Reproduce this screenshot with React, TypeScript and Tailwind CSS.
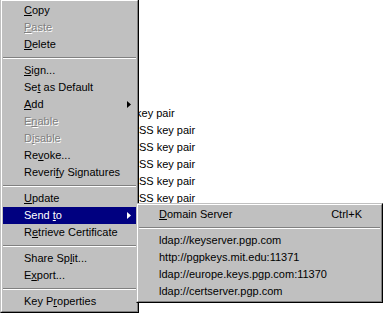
import React from "react";

type Item =
  | { sep: true }
  | { sep?: false; label: string; u: number; disabled?: boolean; sub?: boolean; active?: boolean; shortcut?: string };

const mainItems: Item[] = [
  { label: "Copy", u: 0 },
  { label: "Paste", u: 0, disabled: true },
  { label: "Delete", u: 0 },
  { sep: true },
  { label: "Sign...", u: 0 },
  { label: "Set as Default", u: 2 },
  { label: "Add", u: 0, sub: true },
  { label: "Enable", u: 1, disabled: true },
  { label: "Disable", u: 1, disabled: true },
  { label: "Revoke...", u: 2 },
  { label: "Reverify Signatures", u: 6 },
  { sep: true },
  { label: "Update", u: 0 },
  { label: "Send to", u: 5, sub: true, active: true },
  { label: "Retrieve Certificate", u: 1 },
  { sep: true },
  { label: "Share Split...", u: 8 },
  { label: "Export...", u: 1 },
  { sep: true },
  { label: "Key Properties", u: 5 },
];

const subItems: Item[] = [
  { label: "Domain Server", u: 0, shortcut: "Ctrl+K" },
  { sep: true },
  { label: "ldap://keyserver.pgp.com", u: -1 },
  { label: "http://pgpkeys.mit.edu:11371", u: -1 },
  { label: "ldap://europe.keys.pgp.com:11370", u: -1 },
  { label: "ldap://certserver.pgp.com", u: -1 },
];

function Label({ text, u }: { text: string; u: number }) {
  if (u < 0) return <span>{text}</span>;
  return (
    <span>
      {text.slice(0, u)}
      <u className="underline underline-offset-[1px]">{text[u]}</u>
      {text.slice(u + 1)}
    </span>
  );
}

function Sep() {
  return (
    <div className="h-[9px] flex flex-col justify-center">
      <div className="h-px bg-[#808080]" />
      <div className="h-px bg-white" />
    </div>
  );
}

function Arrow({ white }: { white?: boolean }) {
  return (
    <svg width="4" height="7" viewBox="0 0 4 7" className="block">
      <polygon points="0,0 4,3.5 0,7" fill={white ? "#ffffff" : "#000000"} />
    </svg>
  );
}

function Menu({ items, padL }: { items: Item[]; padL: string }) {
  return (
    <>
      {items.map((it, i) =>
        it.sep ? (
          <Sep key={i} />
        ) : (
          <div
            key={i}
            className={
              "h-[17px] flex items-center justify-between pr-[5px] whitespace-nowrap " +
              padL +
              " " +
              (it.active
                ? "bg-[#000080] text-white"
                : it.disabled
                ? "text-[#808080] [text-shadow:1px_1px_0_#ffffff]"
                : "text-black")
            }
          >
            <Label text={it.label} u={it.u} />
            {it.sub && <Arrow white={it.active} />}
            {it.shortcut && <span className="pr-[13px]">{it.shortcut}</span>}
          </div>
        )
      )}
    </>
  );
}

export default function App() {
  const rows = ["RSA key pair", "DSS key pair", "DSS key pair", "DSS key pair", "DSS key pair", "DSS key pair"];
  return (
    <div className="relative w-[383px] h-[313px] overflow-hidden bg-white font-['Liberation_Sans',Arial,sans-serif] text-[11px] leading-none">
      {/* background list */}
      <div className="pt-[105px] flex flex-col">
        {rows.map((r, i) => (
          <div key={i} className={"h-[17px] flex items-center text-black whitespace-nowrap " + (i === 0 ? "pl-[111px]" : "pl-[131px]")}>
            {r}
          </div>
        ))}
      </div>

      {/* main context menu */}
      <div className="absolute left-0 top-[-1px] w-[139px] bg-[#c0c0c0] border border-t-[#c0c0c0] border-l-[#c0c0c0] border-r-black border-b-black">
        <div className="border border-t-white border-l-white border-r-[#808080] border-b-[#808080] p-px">
          <Menu items={mainItems} padL="pl-[21px]" />
        </div>
      </div>

      {/* submenu */}
      <div className="absolute left-[136px] top-[203px] w-[247px] bg-[#c0c0c0] border border-t-[#c0c0c0] border-l-[#c0c0c0] border-r-black border-b-black">
        <div className="border border-t-white border-l-white border-r-[#808080] border-b-[#808080] p-px">
          <Menu items={subItems} padL="pl-[20px]" />
        </div>
      </div>
    </div>
  );
}
